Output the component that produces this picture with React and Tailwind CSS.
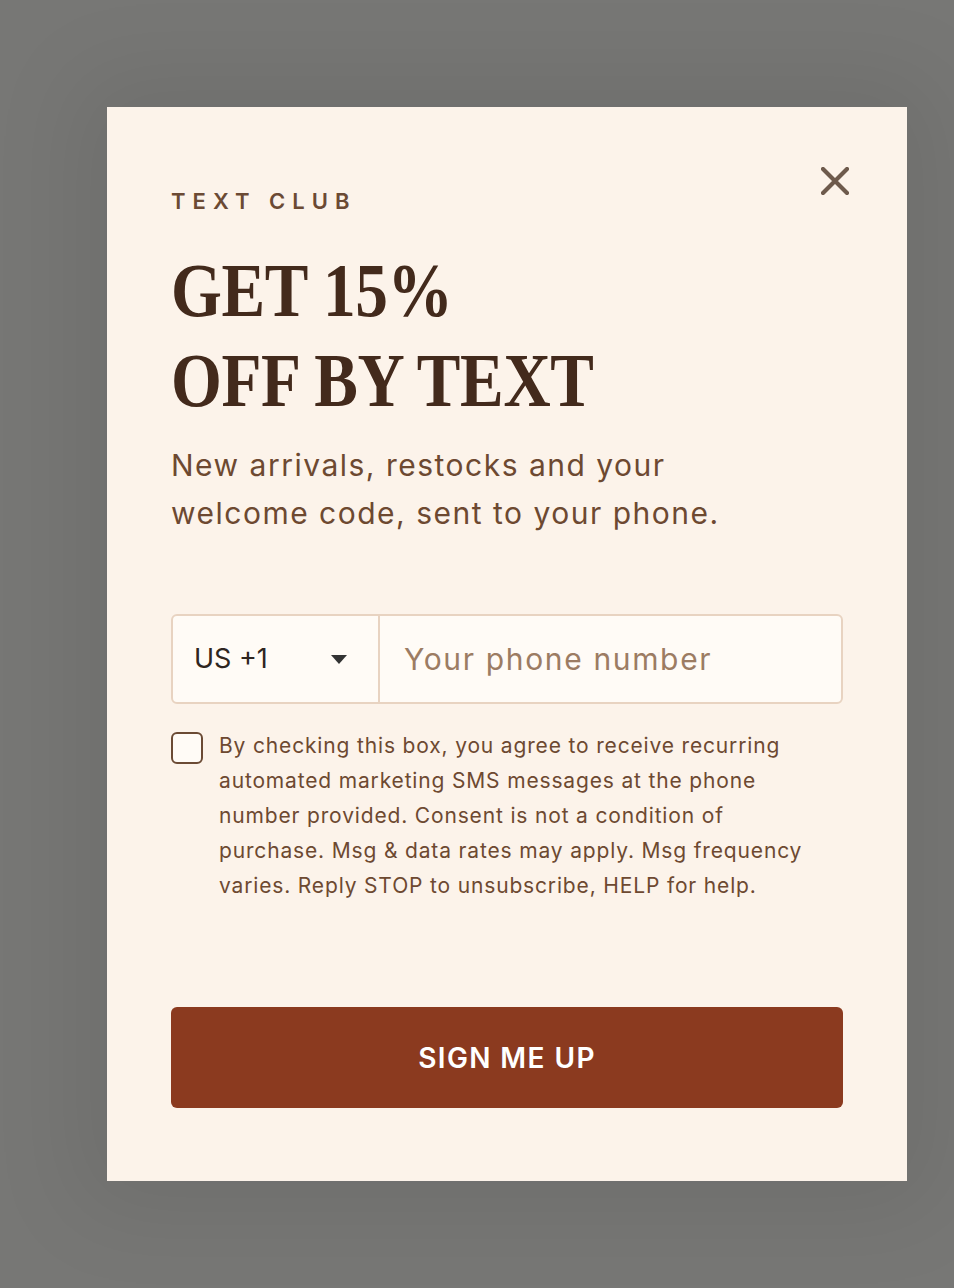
import React from "react";

function CloseIcon() {
  return (
    <svg width="28" height="28" viewBox="0 0 28 28" fill="none">
      <path d="M2 2L26 26M26 2L2 26" stroke="#6e5a4c" strokeWidth="4.2" strokeLinecap="round" />
    </svg>
  );
}

export default function App() {
  const sans = { fontFamily: "Inter, 'Noto Sans', sans-serif" };
  return (
    <div
      className="w-full min-h-[1288px] bg-[#777775] pt-[107px] pl-[107px]"
      style={sans}
    >
      <div className="relative w-[800px] bg-[#fcf3ea] px-16 pt-20 pb-[73px] shadow-[0_0_90px_30px_rgba(0,0,0,0.07)]">
        <button className="absolute right-[58px] top-[60px] p-0" aria-label="Close">
          <CloseIcon />
        </button>

        <div className="text-[22px] leading-[28px] font-semibold tracking-[0.32em] text-[#6b4a34]">
          TEXT CLUB
        </div>

        <h1
          className="mt-[30px] text-[76px] leading-[90px] font-bold text-[#432a1c] tracking-[-0.005em]"
          style={{ fontFamily: "'Liberation Serif', serif" }}
        >
          <span className="inline-block origin-left scale-x-[0.86] whitespace-nowrap">GET 15%</span>
          <br />
          <span className="inline-block origin-left scale-x-[0.86] whitespace-nowrap">OFF BY TEXT</span>
        </h1>

        <p className="mt-4 text-[30px] leading-[48px] tracking-[0.05em] text-[#6d4931]">
          New arrivals, restocks and your
          <br />
          welcome code, sent to your phone.
        </p>

        <div className="mt-[77px] flex h-[90px] rounded-md border-2 border-[#e8d3c1] bg-[#fffbf6]">
          <div className="flex w-[207px] shrink-0 items-center justify-between border-r-2 border-[#e8d3c1] pl-[21px] pr-[31px]">
            <span className="text-[27px] text-[#2e2520]">US +1</span>
            <svg width="16" height="9" viewBox="0 0 16 9">
              <path d="M0 0H16L8 9Z" fill="#333333" />
            </svg>
          </div>
          <div className="flex flex-1 items-center pl-6">
            <span className="text-[30px] tracking-[0.055em] text-[#9c7c63]">Your phone number</span>
          </div>
        </div>

        <div className="mt-6 flex gap-4">
          <div className="mt-1 h-8 w-8 shrink-0 rounded-md border-2 border-[#6b4a34] bg-[#fffbf6]" />
          <p className="text-[21px] leading-[35px] tracking-[0.04em] text-[#6d4931]">
            By checking this box, you agree to receive recurring
            <br />
            automated marketing SMS messages at the phone
            <br />
            number provided. Consent is not a condition of
            <br />
            purchase. Msg &amp; data rates may apply. Msg frequency
            <br />
            varies. Reply STOP to unsubscribe, HELP for help.
          </p>
        </div>

        <button className="mt-[104px] flex h-[101px] w-full items-center justify-center rounded-md bg-[#8b3a1f] text-[28px] font-semibold tracking-[0.05em] text-white">
          SIGN ME UP
        </button>
      </div>
    </div>
  );
}
